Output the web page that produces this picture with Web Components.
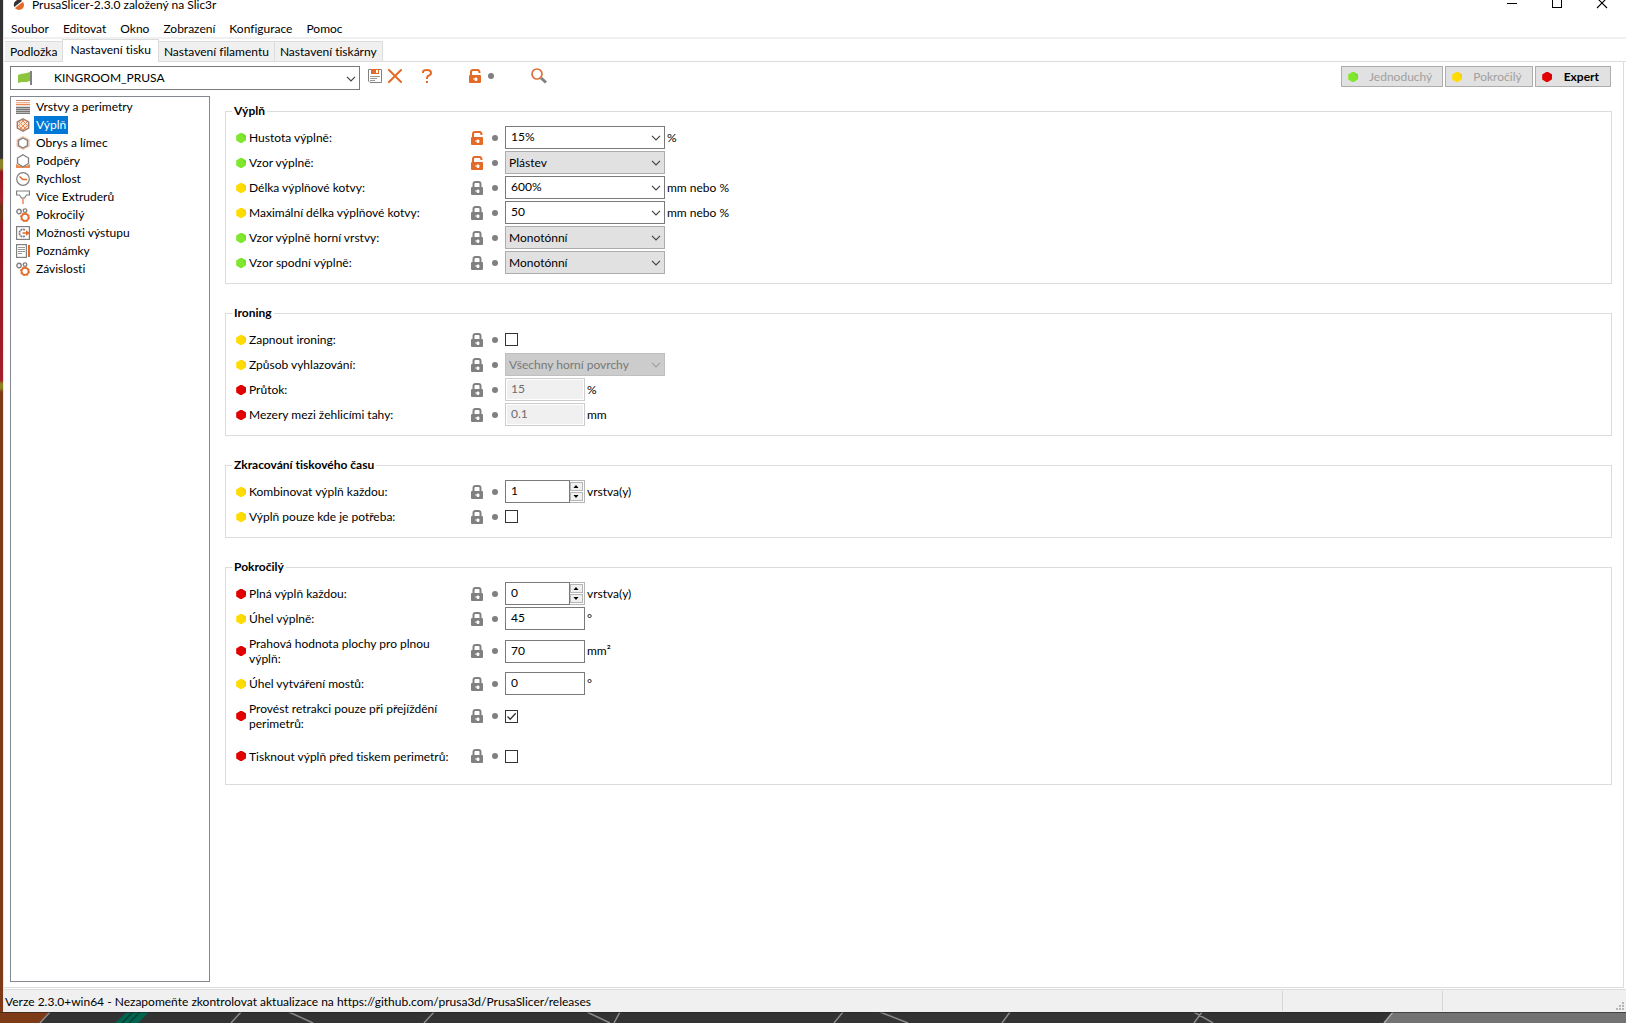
<!DOCTYPE html>
<html lang="cs">
<head>
<meta charset="utf-8">
<title>PrusaSlicer</title>
<style>
html, body { margin: 0; height: 100%; }
body {
  --line: #dcdcdc; --face: #f0f0f0; --edge: #7a7a7a;
  font: 12px/16px Lato, "Open Sans", sans-serif; font-variant-ligatures: none; color: #000; overflow: hidden;
}
</style>
</head>
<body>
<slicer-app></slicer-app>
<script>
const HEX = 'M4.200 0H5.800L9.800 2.400V7.600L5.800 10H4.200L.2 7.600V2.400Z';
const ICONS = {
  logo: [16, 16, '<circle cx="8" cy="8" r="5" fill="#e46a28"/><path d="M3 9A5 5 0 0 1 11.500 4.400L5.500 9.500L3.200 10Z" fill="#333"/><path d="M3 11L12 4" stroke="#fff" stroke-width="1.200"/>'],
  min: [12, 12, '<path d="M1 6.500H11" stroke="#000"/>'],
  max: [12, 12, '<rect x="1.5" y="1.5" width="9" height="9" fill="none" stroke="#000"/>'],
  close: [12, 12, '<path d="M1 1L11 11M11 1L1 11" stroke="#000" stroke-width="1.1"/>'],
  flag: [16, 16, '<path d="M1 5C5 3 8 4 13 2V11C8 13 5 11 1 13Z" fill="#8cc63f"/><path d="M14 1V15" stroke="#808080" stroke-width="2"/>'],
  save: [14, 14, '<path d="M.5 .5H13.5V13.5H2L.5 12Z" fill="#fff" stroke="#808080"/><path d="M3 0H11V5H3Z" fill="#e46a28"/><path d="M8 1H10V4H8Z" fill="#fff"/><path d="M2 7.5H12M2 9.5H9M2 11.5H7" stroke="#999"/>'],
  cross: [14, 14, '<path d="M1 1L13 13M13 1L1 13" stroke="#e46a28" stroke-width="2" stroke-linecap="round"/>'],
  help: [12, 14, '<path d="M2 4V3Q2 1 6 1T10 4Q10 6 7.500 6.700Q6 7.200 6 10" fill="none" stroke="#e46a28" stroke-width="2"/><rect x="5" y="12" width="2" height="2" fill="#e46a28"/>'],
  unlock: [12, 14, '<path d="M2 7V3Q2 1 4 1H8.500Q10.500 1 10.500 4" fill="none" stroke="#e46a28" stroke-width="2"/><rect y="6" width="12" height="8" rx="1" fill="#e46a28"/><path d="M4 10H6.500M6 9V11.500H8V9Z" stroke="#fff" fill="#fff" stroke-width=".8"/>'],
  lock: [12, 14, '<path d="M2.500 7V3Q2.500 1 4.500 1H7.500Q9.500 1 9.500 3V7" fill="none" stroke="#808080" stroke-width="2"/><rect y="6" width="12" height="8" rx="1" fill="#808080"/><path d="M4 10H6.500M6 9V11.500H8V9Z" stroke="#fff" fill="#fff" stroke-width=".8"/>'],
  dot: [6, 6, '<circle cx="3" cy="3" r="3" fill="#808080"/>'],
  search: [16, 16, '<circle cx="6" cy="6" r="5" fill="none" stroke="#dc7038" stroke-width="1.700"/><path d="M10 10L15 14.500" stroke="#808080" stroke-width="3"/>'],
  simple: [10, 10, `<path d="${HEX}" fill="#7fe82d"/><path d="M5.800 0L9.800 2.400V7.600Z" fill="#72d92c"/>`],
  advanced: [10, 10, `<path d="${HEX}" fill="#ffdc00"/><path d="M5.800 0L9.800 2.400V7.600Z" fill="#f8cd0c"/>`],
  expert: [10, 10, `<path d="${HEX}" fill="#e30000"/><path d="M5.800 0L9.800 2.400V7.600Z" fill="#c60006"/>`],
  chevron: [10, 6, '<path d="M1 .8L5 4.800L9 .8" fill="none" stroke="currentColor" stroke-width="1.200"/>'],
  up: [6, 3, '<path d="M.5 3L3 0L5.500 3Z"/>'],
  down: [6, 3, '<path d="M.5 0L3 3L5.500 0Z"/>'],
  check: [13, 13, '<path d="M2.500 6.500L5.200 9.300L10.700 3.300" fill="none" stroke="#333" stroke-width="1.300"/>'],
  grip: [8, 8, '<path d="M6 0h2v2H6zM3 3h2v2H3zM6 3h2v2H6zM0 6h2v2H0zM3 6h2v2H3zM6 6h2v2H6z" fill="#b5b5b5"/>'],
  layers: [14, 14, '<path d="M0 .5H14" stroke="#c0866a"/><path d="M0 2.500H14" stroke="#f4b28c"/><path d="M0 4.500H14" stroke="#ed8a52" stroke-width="1.500"/><path d="M0 7.500H14M0 9.500H14M0 11.500H14M0 13.500H14" stroke="#777" stroke-width="1.300"/>'],
  infill: [14, 14, '<path d="M7 .8L12.700 4V10L7 13.200L1.300 10V4Z" fill="#fbe3d5" stroke="#a07c6a" stroke-width="1.400"/><path d="M3 4L10 11M6 2L12 8M2 7L7 12M11 4L4 11M8 2L2 8M12 7L7 12" stroke="#ed8a52"/>'],
  brim: [14, 14, '<path d="M7 .7L12.900 4V10L7 13.300L1.100 10V4Z" fill="none" stroke="#f6c3a6" stroke-width="1.300"/><path d="M7 2L11.500 4.500V9.500L7 12L2.500 9.500V4.500Z" fill="#fff" stroke="#808080" stroke-width="1.400"/>'],
  support: [14, 14, '<path d="M0 14V10L4 12H10L14 10V14Z" fill="#ed8a52"/><path d="M7 .7L12.500 4V9.500L7 12.800L1.500 9.500V4Z" fill="#fff" stroke="#808080" stroke-width="1.300"/>'],
  time: [14, 14, '<circle cx="7" cy="7" r="6.300" fill="none" stroke="#808080" stroke-width="1.200"/><path d="M3.500 4.500L7 7.500H11" fill="none" stroke="#e46a28" stroke-width="1.600"/>'],
  funnel: [14, 14, '<path d="M.6 1H13.400V5H10.500L8.500 8H5.500L3.500 5H.6Z" fill="none" stroke="#808080" stroke-width="1.200"/><path d="M7 8V14" stroke="#ed8a52" stroke-width="1.500"/>'],
  gears: [14, 14, '<circle cx="3" cy="3.500" r="2.200" fill="none" stroke="#808080" stroke-width="1.400"/><circle cx="9" cy="2.600" r="1.800" fill="none" stroke="#808080" stroke-width="1.300"/><circle cx="9" cy="9.300" r="3.500" fill="none" stroke="#e46a28" stroke-width="1.800"/><circle cx="9" cy="9.300" r="4.600" fill="none" stroke="#e46a28" stroke-width=".9" stroke-dasharray="1.800 1.800"/>'],
  output: [14, 14, '<rect x=".6" y=".6" width="12.800" height="12.800" fill="none" stroke="#808080" stroke-width="1.200"/><path d="M9 4A3.600 3.600 0 1 0 9 10" fill="none" stroke="#808080" stroke-width="1.800" stroke-dasharray="2 .6"/><path d="M6.500 6.200H10V4.200L14 7L10 9.800V7.800H6.500Z" fill="#e46a28"/>'],
  notes: [14, 14, '<rect x=".6" y=".6" width="9.800" height="12.800" fill="#fff" stroke="#808080" stroke-width="1.200"/><path d="M2 3.500H9M2 5.500H9M2 7.500H9M2 9.500H6" stroke="#999"/><path d="M13 1V13" stroke="#e46a28" stroke-width="2"/>']
};

const define = (name, html) => customElements.define(name, class extends HTMLElement {
  constructor() {
    super();
    this.attachShadow({ mode: 'open' });
  }
  connectedCallback() {
    this.shadowRoot.innerHTML = '<style>*{box-sizing:border-box}button,input,select{font:inherit;font-variant-ligatures:none;color:inherit;margin:0;border-radius:0;outline:0}</style>' +
      (typeof html === 'function' ? html(this) : html);
  }
});

define('app-icon', el => {
  const [w, h, body] = ICONS[el.getAttribute('name')];
  return `<style>:host{display:inline-flex;flex:none;width:${w}px;height:${h}px;pointer-events:none}svg{display:block}</style>
  <svg width="${w}" height="${h}" viewBox="0 0 ${w} ${h}" aria-hidden="true">${body}</svg>`;
});

define('title-bar', `<style>
  :host{display:flex;align-items:center;flex:none;height:31px;margin-top:-11px;padding:0 2px 0 7px}
  h1{flex:1;margin:0 0 0 5px;font:inherit}
  button{width:45px;height:28px;border:0;padding:0;background:none;display:grid;place-items:center;align-self:flex-start}
  </style><app-icon name="logo"></app-icon><h1><slot></slot></h1>
  <button aria-label="Minimalizovat"><app-icon name="min"></app-icon></button>
  <button aria-label="Maximalizovat"><app-icon name="max"></app-icon></button>
  <button aria-label="Zavřít"><app-icon name="close"></app-icon></button>`);

define('menu-bar', el => `<style>
  :host{display:flex;flex:none;height:19px;border-bottom:2px solid var(--face)}
  button{border:0;background:none;padding:0 7px;line-height:17px}
  </style>${el.getAttribute('items').split('|').map(t => `<button>${t}</button>`).join('')}`);

define('tab-strip', el => `<style>
  :host{display:flex;align-items:flex-end;flex:none;height:23px;padding-left:1px;border-bottom:1px solid var(--line)}
  button{height:20px;border:1px solid var(--line);border-bottom:0;border-left-width:0;background:var(--face);padding:0 5px;line-height:19px}
  button:first-child{border-left-width:1px}
  [aria-selected=true]{height:23px;padding:0 7px 4px;background:#fff;margin-bottom:-1px;border-left-width:1px;margin-left:-1px}
  </style>${el.getAttribute('items').split('|').map((t, i) => `<button role="tab" aria-selected="${i === 1}">${t}</button>`).join('')}`);

define('mode-button', el => `<style>
  :host{display:block}
  button{display:flex;align-items:center;height:21px;border:1px solid #adadad;background:#e1e1e1;padding:0 10px 0 6px;gap:11px;color:#a0a0a0}
  :host([active]) button{color:#000;font-weight:700;padding-right:11px;gap:12px}
  </style><button><app-icon name="${el.getAttribute('mode')}"></app-icon><slot></slot></button>`);

define('preset-bar', `<style>
  :host{display:flex;flex:none;height:30px;align-items:flex-start}
  .preset{display:grid;width:350px;height:24px;align-items:center}
  .preset>*{grid-area:1/1}
  select{appearance:none;width:100%;height:24px;border:1px solid var(--edge);background:#fff;padding:0 0 0 43px}
  .preset app-icon{margin-left:7px}
  .preset .arrow{justify-self:end;margin:2px 4px 0 0;color:#444}
  .tool{border:0;padding:0;background:none;display:grid;place-items:center;width:20px;height:20px}
  .modes{display:flex;gap:2px;margin-left:auto;padding-right:1px}
  .a{margin-left:5px}.b{margin-left:12px}.c{margin-left:28px}.d{width:12px}.e{margin-left:32px}
  </style>
  <div class="preset"><select aria-label="Profil tisku"><option>KINGROOM_PRUSA</option></select>
  <app-icon name="flag"></app-icon><app-icon class="arrow" name="chevron"></app-icon></div>
  <button class="tool a" aria-label="Uložit"><app-icon name="save"></app-icon></button>
  <button class="tool" aria-label="Smazat"><app-icon name="cross"></app-icon></button>
  <button class="tool b" aria-label="Nápověda"><app-icon name="help"></app-icon></button>
  <button class="tool c" aria-label="Zámek"><app-icon name="unlock"></app-icon></button>
  <button class="tool d" aria-label="Vrátit"><app-icon name="dot"></app-icon></button>
  <button class="tool e" aria-label="Hledat"><app-icon name="search"></app-icon></button>
  <div class="modes"><slot></slot></div>`);

define('tree-item', el => `<style>
  :host{display:block}
  a{display:flex;align-items:center;height:18px;gap:4px;padding-left:5px;color:inherit;text-decoration:none}
  span{padding:1px 2px}
  :host([active]) span{background:#0078d7;color:#fff}
  </style><a href="#"><app-icon name="${el.getAttribute('icon')}"></app-icon><span><slot></slot></span></a>`);

define('settings-tree', `<style>
  :host{display:block;flex:none;width:200px;border:1px solid #828790;background:#fff;padding-top:1px}
  </style><nav><slot></slot></nav>`);

define('option-group', el => `<style>
  :host{display:block}
  fieldset{margin:0;min-width:0;border:1px solid var(--line);padding:6px 10px 8px}
  legend{margin-left:-4px;padding:0 2px;font-weight:700;height:16px}
  </style><fieldset><legend>${el.getAttribute('heading')}</legend><slot></slot></fieldset>`);

const control = el => {
  const v = el.getAttribute('value') || '', off = el.hasAttribute('disabled') ? 'disabled' : '';
  switch (el.getAttribute('kind')) {
    case 'combo': return `<div class="box wide"><input id="f" value="${v}"><app-icon class="arrow" name="chevron"></app-icon></div>`;
    case 'choice': return `<div class="box wide"><select id="f" ${off}><option>${v}</option></select><app-icon class="arrow" name="chevron"></app-icon></div>`;
    case 'spin': return `<div class="spin"><input id="f" value="${v}"><div><button aria-label="Zvýšit"><app-icon name="up"></app-icon></button><button aria-label="Snížit"><app-icon name="down"></app-icon></button></div></div>`;
    case 'check': return `<div class="tick"><input id="f" type="checkbox" ${v}>${v ? '<app-icon name="check"></app-icon>' : ''}</div>`;
    default: return `<div class="box"><input id="f" value="${v}" ${off}></div>`;
  }
};
define('option-row', el => `<style>
  :host{display:flex;align-items:center;min-height:25px}
  :host([tall]){min-height:40px}
  label{width:206px;margin:0 16px 0 3px;line-height:15px}
  .dot{margin:0 7px 0 9px}
  .unit{margin-left:2px}
  .box{display:grid;width:80px;height:23px;align-items:center}
  .wide{width:160px}
  .box>*,.tick>*{grid-area:1/1}
  .box input,.box select{width:100%;height:23px;border:1px solid var(--edge);background:#fff;padding:0 5px 2px}
  .box select{appearance:none;background:#e1e1e1;border-color:#adadad;padding:0 3px}
  .arrow{justify-self:end;margin-right:4px;color:#444}
  .box input:disabled{border-color:#ccc;background:var(--face);box-shadow:inset 0 0 0 1px #fff;color:#6d6d6d}
  .box select:disabled{background:#ccc;border-color:#bfbfbf;color:#787878;opacity:1}
  :host([disabled]) .arrow{color:#a0a0a0}
  .tick{display:grid}
  .tick input{appearance:none;width:13px;height:13px;border:1px solid #333;background:#fff}
  .spin{display:flex;width:80px;height:23px}
  .spin input{flex:1;min-width:0;border:1px solid var(--edge);padding:0 5px 2px}
  .spin div{display:flex;flex-direction:column;gap:1px;width:15px;padding:1px 1px 1px 0;border:1px solid #b5b5b5;border-left:0}
  .spin button{flex:1;display:grid;place-items:center;border:1px solid #b5b5b5;background:var(--face);padding:0;min-height:0}
  .spin button app-icon{margin-right:1px}
  </style>
  <app-icon name="${el.getAttribute('mode')}"></app-icon>
  <label for="f"><slot></slot></label>
  <app-icon name="${el.hasAttribute('changed') ? 'unlock' : 'lock'}"></app-icon>
  <app-icon class="dot" name="dot"></app-icon>
  ${control(el)}
  <span class="unit"><slot name="unit"></slot></span>`);

define('status-bar', `<style>
  :host{display:flex;flex:none;height:23px;box-sizing:border-box;border-top:1px solid var(--line);background:var(--face);padding:1px 0;line-height:22px}
  .text{flex:1;padding-left:1px}
  .pane{width:160px;border-left:1px solid #d7d7d7}
  .last{width:184px;display:flex;justify-content:flex-end;align-items:flex-end;padding:0 2px 1px 0}
  </style><div class="text"><slot></slot></div><div class="pane"></div><div class="pane last"><app-icon name="grip"></app-icon></div>`);

define('desk-edge', `<style>:host{display:block;flex:none;height:11px;background:#333;overflow:hidden}svg{display:block}</style>
  <svg width="1640" height="11" viewBox="0 0 1640 11" aria-hidden="true">
  <path d="M0 0H50L40 11H0Z" fill="#7d3b18"/><path d="M127 0H149L138 11H115Z" fill="#00644e"/>
  <path d="M133 0L122 11M140 0L129 11" stroke="#004234" stroke-width="1.500"/>
  <path d="M50 0L40 11M241 0L231 11M289 0L313 11M434 0L424 11M587 0L610 11M620 0L614 11M843 0L834 11M880 0L908 11M1010 0L1002 11M1194 0L1213 11M1202 0L1194 11" fill="none" stroke="#8b8b8b" stroke-width="1.500"/>
  <path d="M1393 0H1640V11H1384Z" fill="#737373"/><path d="M1393 0L1384 11" stroke="#aaa" stroke-width="1.500"/><path d="M0 .5H1640" stroke="#222" opacity=".6"/></svg>`);

define('slicer-app', `<style>
  :host{display:flex;flex-direction:column;height:100vh;overflow:hidden;
    background:linear-gradient(#333 0 158px,#8d8525 160px 168px,#8e1620 172px,#a8202a 200px,#6c3517 206px 218px,#8e1620 222px,#a3202b 380px,#8d8525 384px 388px,#7d3b18 392px)}
  main{flex:1;min-height:0;display:flex;flex-direction:column;margin-left:3px;background:#fff;border-left:1px solid #e8e8e8}
  .page{flex:1;min-height:0;display:flex;flex-direction:column;margin:0 2px 1px 0;padding:4px 11px 5px 6px;border:1px solid var(--line);border-top:0;border-left:0}
  .split{flex:1;min-height:0;display:flex;gap:15px}
  .groups{flex:1;min-width:0;display:flex;flex-direction:column;gap:21px;padding-top:7px}
  </style>
  <main>
  <title-bar>PrusaSlicer-2.3.0 založený na Slic3r</title-bar>
  <menu-bar items="Soubor|Editovat|Okno|Zobrazení|Konfigurace|Pomoc"></menu-bar>
  <tab-strip items="Podložka|Nastavení tisku|Nastavení filamentu|Nastavení tiskárny"></tab-strip>
  <div class="page">
    <preset-bar><mode-button mode="simple">Jednoduchý</mode-button><mode-button mode="advanced">Pokročilý</mode-button><mode-button mode="expert" active>Expert</mode-button></preset-bar>
    <div class="split">
      <settings-tree>
        <tree-item icon="layers">Vrstvy a perimetry</tree-item>
        <tree-item icon="infill" active>Výplň</tree-item>
        <tree-item icon="brim">Obrys a límec</tree-item>
        <tree-item icon="support">Podpěry</tree-item>
        <tree-item icon="time">Rychlost</tree-item>
        <tree-item icon="funnel">Více Extruderů</tree-item>
        <tree-item icon="gears">Pokročilý</tree-item>
        <tree-item icon="output">Možnosti výstupu</tree-item>
        <tree-item icon="notes">Poznámky</tree-item>
        <tree-item icon="gears">Závislosti</tree-item>
      </settings-tree>
      <div class="groups">
        <option-group heading="Výplň">
          <option-row mode="simple" changed kind="combo" value="15%">Hustota výplně:<span slot="unit">%</span></option-row>
          <option-row mode="simple" changed kind="choice" value="Plástev">Vzor výplně:</option-row>
          <option-row mode="advanced" kind="combo" value="600%">Délka výplňové kotvy:<span slot="unit">mm nebo %</span></option-row>
          <option-row mode="advanced" kind="combo" value="50">Maximální délka výplňové kotvy:<span slot="unit">mm nebo %</span></option-row>
          <option-row mode="simple" kind="choice" value="Monotónní">Vzor výplně horní vrstvy:</option-row>
          <option-row mode="simple" kind="choice" value="Monotónní">Vzor spodní výplně:</option-row>
        </option-group>
        <option-group heading="Ironing">
          <option-row mode="advanced" kind="check">Zapnout ironing:</option-row>
          <option-row mode="advanced" kind="choice" value="Všechny horní povrchy" disabled>Způsob vyhlazování:</option-row>
          <option-row mode="expert" kind="text" value="15" disabled>Průtok:<span slot="unit">%</span></option-row>
          <option-row mode="expert" kind="text" value="0.1" disabled>Mezery mezi žehlicími tahy:<span slot="unit">mm</span></option-row>
        </option-group>
        <option-group heading="Zkracování tiskového času">
          <option-row mode="advanced" kind="spin" value="1">Kombinovat výplň každou:<span slot="unit">vrstva(y)</span></option-row>
          <option-row mode="advanced" kind="check">Výplň pouze kde je potřeba:</option-row>
        </option-group>
        <option-group heading="Pokročilý">
          <option-row mode="expert" kind="spin" value="0">Plná výplň každou:<span slot="unit">vrstva(y)</span></option-row>
          <option-row mode="advanced" kind="text" value="45">Úhel výplně:<span slot="unit">°</span></option-row>
          <option-row mode="expert" tall kind="text" value="70">Prahová hodnota plochy pro plnou výplň:<span slot="unit">mm²</span></option-row>
          <option-row mode="advanced" kind="text" value="0">Úhel vytváření mostů:<span slot="unit">°</span></option-row>
          <option-row mode="expert" tall kind="check" value="checked">Provést retrakci pouze při přejíždění perimetrů:</option-row>
          <option-row mode="expert" tall kind="check">Tisknout výplň před tiskem perimetrů:</option-row>
        </option-group>
      </div>
    </div>
  </div>
  <status-bar>Verze 2.3.0+win64 - Nezapomeňte zkontrolovat aktualizace na https://github.com/prusa3d/PrusaSlicer/releases</status-bar>
  </main>
  <desk-edge></desk-edge>`);
</script>
</body>
</html>
